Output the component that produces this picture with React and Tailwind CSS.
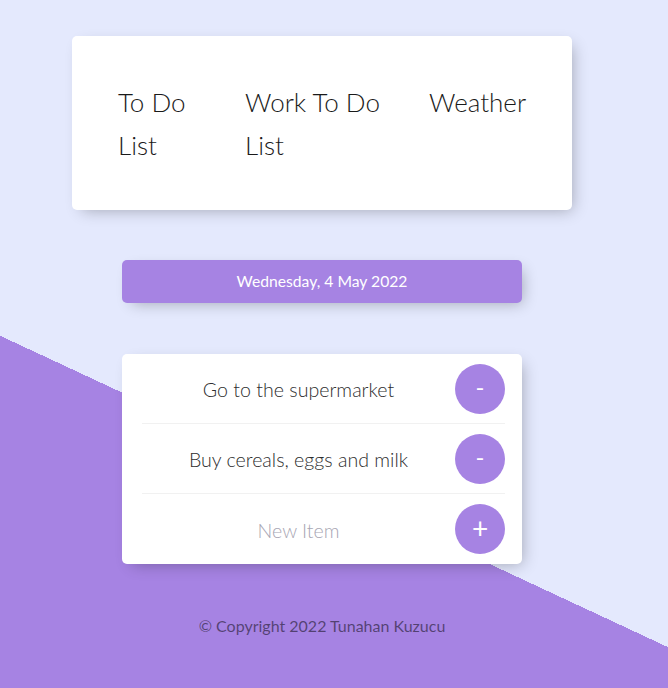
import React from "react";

const items = ["Go to the supermarket", "Buy cereals, eggs and milk"];

const App = () => {
    return (
        <div className="min-h-screen bg-[linear-gradient(25deg,#A683E3_35.25%,#E4E9FD_35.25%)] pr-[24px] pt-[36px] pb-[40px] font-['Lato',sans-serif]">
            <nav className="mx-auto w-[500px] h-[174px] bg-white rounded-[5px] shadow-[5px_5px_15px_-5px_rgba(0,0,0,0.3)] flex items-center pl-[46px]">
                <ul className="flex items-start text-[26px] leading-[43px] font-light text-[#1a1a1a] pt-[2px]">
                    <li className="w-[127px] pr-[30px]">To Do List</li>
                    <li className="w-[184px] pr-[30px]">Work To Do List</li>
                    <li>Weather</li>
                </ul>
            </nav>

            <div className="mx-auto mt-[50px] w-[400px] h-[43px] rounded-[5px] bg-[#A683E3] shadow-[5px_5px_15px_-5px_rgba(0,0,0,0.3)] flex items-center justify-center text-white text-[15.7px]">
                Wednesday, 4 May 2022
            </div>

            <div className="mx-auto mt-[51px] w-[400px] rounded-[5px] bg-white shadow-[5px_5px_15px_-5px_rgba(0,0,0,0.3)] pl-[20px] pr-[17px]">
                {items.map(item => (
                    <div key={item} className="h-[70px] flex items-center border-b border-[#F1F1F1]">
                        <p className="flex-1 pt-[2px] text-center text-[19.6px] font-light text-[#2e2e2e]">{item}</p>
                        <button className="w-[50px] h-[50px] rounded-full bg-[#A683E3] text-white text-[24px] leading-none pb-[4px]">-</button>
                    </div>
                ))}
                <div className="h-[70px] flex items-center">
                    <p className="flex-1 pt-[3px] text-center text-[19.6px] font-light text-[#a8a6b4]">New Item</p>
                    <button className="w-[50px] h-[50px] rounded-full bg-[#A683E3] text-white text-[28px] leading-none pb-[3px]">+</button>
                </div>
            </div>

            <footer className="mt-[50px] text-center text-[16px] text-black/50">
                © Copyright 2022 Tunahan Kuzucu
            </footer>
        </div>
    );
};

export default App;
